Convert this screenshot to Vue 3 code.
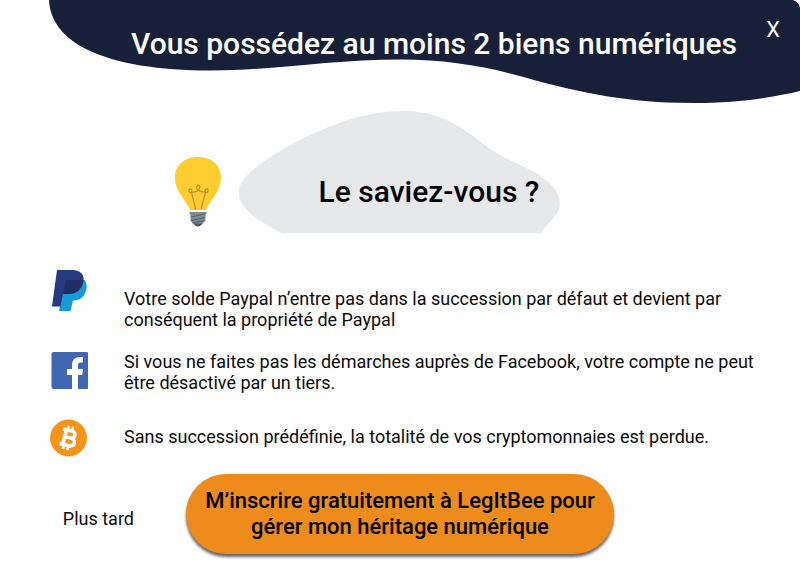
<script setup>
const emit = defineEmits(['close', 'later', 'register'])
</script>

<template>
  <main class="dialog" role="dialog" aria-labelledby="title">
    <header class="header">
      <svg class="wave" viewBox="0 0 800 104" preserveAspectRatio="none" aria-hidden="true">
        <path
          fill="#181f38"
          d="M49 0C50 20 62 37 86 49C116 64 160 70.500 210 70.500C275 70.500 330 59.500 402 59.500C440 59.500 480 65 514 74.500C570 90 620 103 693 103C735 103 765 99 800 91V8Q799 2 793 0Z"
        />
      </svg>
      <h1 id="title" class="title">Vous possédez au moins 2 biens numériques</h1>
      <button class="close" type="button" @click="emit('close')">X</button>
    </header>

    <section class="hero">
      <svg class="bulb" viewBox="0 0 48 72" aria-hidden="true">
        <path fill="#fecd2f" d="M16 54C13 45 1 36 1 21.500C1 8.500 11 1 24 1S47 8.500 47 21.500C47 36 35 45 32 54Z" />
        <path
          fill="none"
          stroke="#c8912a"
          stroke-width="1.300"
          stroke-linecap="round"
          stroke-linejoin="round"
          d="M21.500 53L17.500 36.500C15 37.500 14 33 16 33C18.500 33 18 36.500 17.500 36.500C20 36 23 35.500 24.500 34C26.500 31.500 26 29 24 29.500C22 30 22 32.500 24 34C26 35.500 29 36 31.500 36.500C34 37.500 35 33 33 33C30.500 33 31 36.500 31.500 36.500L27 53"
        />
        <path fill="#7f8b91" d="M15.500 56H32.500V58L31.500 59V65L28 68Q24 72 20 68L16.500 65V59L15.500 58Z" />
        <path fill="none" stroke="#566168" stroke-width="1" d="M17 61L31 58M17 64.500L31 61.500M18 67L30 64.500" />
        <path fill="#4c555b" d="M19 67.500H29Q25 71 24 70.500Q22 70.500 19 67.500Z" />
      </svg>
      <div class="bubble">
        <svg class="blob" viewBox="0 0 322 122" preserveAspectRatio="none" aria-hidden="true">
          <path
            fill="#e7e8ea"
            d="M43 122C20 110 0 99 0 81C0 68 14 58 33 45C77 18 121 0 165 0C196 0 217 12 238 28C266 51 285 53 303 66C316 75 321 84 321 93C321 104 310 110 302 122Z"
          />
        </svg>
        <h2 class="question">Le saviez-vous ?</h2>
      </div>
    </section>

    <ul class="facts">
      <li class="fact fact-lead">
        <svg class="icon" viewBox="0 0 38 44" aria-hidden="true">
          <path fill="#179bd7" d="M15 11H34.500C37 14 37.500 18 35.500 23C33.500 29 29 31.500 23 31.500L20.500 42H9Z" />
          <path fill="#253b80" d="M7 1H22C30 1 34.500 5 33.500 12C32 21 26 25 18 25H13L10.500 37.500H2Z" />
          <path fill="#222d65" d="M16 11H33.500C32 21 26 25 18 25H13Z" />
        </svg>
        <p class="text">Votre solde Paypal n’entre pas dans la succession par défaut et devient par conséquent la propriété de Paypal</p>
      </li>
      <li class="fact">
        <svg class="icon" viewBox="0 0 38 38" aria-hidden="true">
          <rect x="1.500" y="1" width="37" height="37" rx="2" fill="#4267b2" />
          <path
            fill="#fff"
            d="M22 38V24H17V18H22V14C22 9 25 6 30 6L33 6.300V11.500H30.500C28.500 11.500 28 12.500 28 14.300V18H33L32.300 24H28V38Z"
          />
        </svg>
        <p class="text">Si vous ne faites pas les démarches auprès de Facebook, votre compte ne peut être désactivé par un tiers.</p>
      </li>
      <li class="fact">
        <svg class="icon" viewBox="0 0 38 38" aria-hidden="true">
          <circle cx="18.500" cy="19" r="18.500" fill="#f7931a" />
          <g fill="none" stroke="#fff" transform="rotate(14 18.500 19)">
            <path stroke-width="3.600" d="M14.500 11.500V26.500M11 11.500H20C25.500 11.500 25.500 18.500 20 18.500H15M20 18.500C27 18.500 27 26.500 20.500 26.500H11" />
            <path stroke-width="2.600" d="M15.800 7V11M20.300 7V11M15.800 27V31M20.300 27V31" />
          </g>
        </svg>
        <p class="text">Sans succession prédéfinie, la totalité de vos cryptomonnaies est perdue.</p>
      </li>
    </ul>

    <footer class="actions">
      <button class="later" type="button" @click="emit('later')">Plus tard</button>
      <button class="cta" type="button" @click="emit('register')">
        M’inscrire gratuitement à LegItBee pour gérer mon héritage numérique
      </button>
    </footer>
  </main>
</template>

<style>
body {
  margin: 0;
  background: #fefefe;
}
</style>

<style scoped>
.dialog {
  padding-bottom: 28px;
  font-family: Roboto, "Liberation Sans", sans-serif;
  color: #0b0b0b;
}

h1,
h2,
p,
ul {
  margin: 0;
  padding: 0;
}

button {
  padding: 0;
  border: 0;
  background: none;
  color: inherit;
  font: inherit;
  cursor: pointer;
}

.header {
  position: relative;
  display: grid;
  grid-template-columns: 124px 1fr 56px;
  align-items: start;
  height: 104px;
}

.wave {
  position: absolute;
  inset: 0;
  z-index: -1;
  width: 100%;
  height: 100%;
}

.title {
  grid-column: 2;
  padding-top: 26px;
  color: #fff;
  font-size: 30px;
  font-weight: 500;
  line-height: 36px;
  text-align: center;
  white-space: nowrap;
}

.close {
  justify-self: end;
  margin: 16px 20px 0 0;
  color: #fff;
  font-size: 22px;
  line-height: 28px;
}

.hero {
  display: flex;
  align-items: flex-end;
  justify-content: center;
  gap: 17px;
  padding: 7px 66px 0 0;
}

.bulb {
  flex: none;
  width: 48px;
  height: 72px;
  margin-bottom: 5px;
}

.bubble {
  position: relative;
  box-sizing: border-box;
  padding: 63px 21px 23px 80px;
}

.blob {
  position: absolute;
  inset: 0;
  z-index: -1;
  width: 100%;
  height: 100%;
}

.question {
  color: #000;
  font-size: 30px;
  font-weight: 500;
  line-height: 36px;
  white-space: nowrap;
}

.facts {
  display: grid;
  gap: 20px;
  padding: 36px 38px 0 50px;
  list-style: none;
}

.fact {
  display: grid;
  grid-template-columns: 38px 1fr;
  column-gap: 36px;
  align-items: start;
  min-height: 48px;
}

.fact-lead .text {
  padding: 19px 0 1px;
}

.icon {
  width: 38px;
}

.text {
  display: flex;
  align-items: center;
  min-height: 34px;
  font-size: 18px;
  line-height: 21px;
}

.actions {
  display: grid;
  grid-template-columns: 186px auto 1fr;
  align-items: center;
  padding-top: 7px;
}

.later {
  justify-self: end;
  padding: 8px 52px 0 0;
  font-size: 18px;
  line-height: 21px;
}

.cta {
  justify-self: start;
  width: 428px;
  padding: 14px 16px;
  border-radius: 40px;
  background: #ed8c1c;
  box-shadow: 0 3px 3px #00000099;
  color: #000;
  font-size: 22px;
  font-weight: 500;
  line-height: 26px;
}
</style>
